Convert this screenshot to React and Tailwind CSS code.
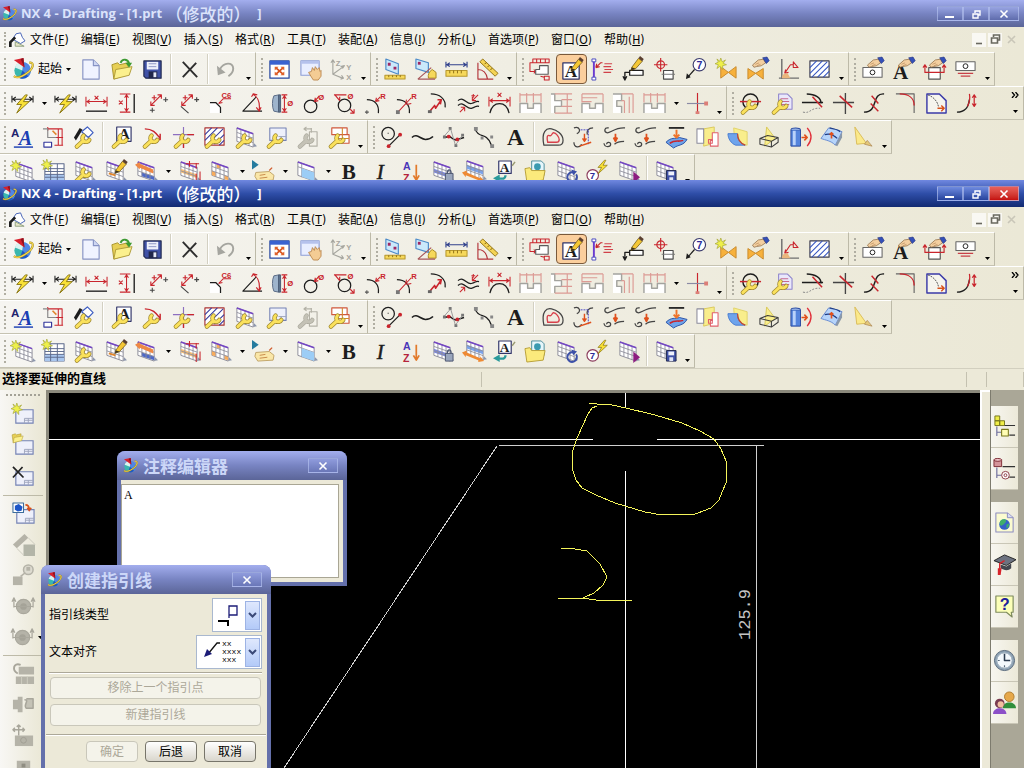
import React from "react";

const K = "#1d1d1d";
const R = "#c9252d";
const GR = "#b5b3a8";

const L = (d, c = K, w = 1.2, f = "none") => (
  <path d={d} stroke={c} strokeWidth={w} fill={f} strokeLinejoin="round" />
);
const F = (d, c) => <path d={d} fill={c} />;
const T = (x, y, s, t, c = K, serif = false) => (
  <text
    x={x}
    y={y}
    fontSize={s}
    fill={c}
    fontWeight="bold"
    fontFamily={serif ? '"Liberation Serif", serif' : '"Liberation Sans", sans-serif'}
  >
    {t}
  </text>
);

const Wrench = ({ c = "#fae15c", o = "#a08a30" }) => (
  <g fill="none" strokeLinecap="round">
    <path d="M4 21.5L10.500 15.500M11 10a3.800 3.800 0 1 0 6 4.500" stroke={o} strokeWidth="4.600" />
    <path d="M4 21.5L10.500 15.500M11 10a3.800 3.800 0 1 0 6 4.500" stroke={c} strokeWidth="3" />
  </g>
);
const Bolt = () => (
  <path d="M15 3L6 13h5l-5 9 13-12h-6l4-7z" fill="#f9e136" stroke="#8a7614" strokeWidth="1" />
);
const Grid = ({ fill = "#fff", band, line = "#8d8d9a" }) => (
  <g>
    <path d="M20 22l4-1-3-3z" fill="#8d97ad" />
    <path d="M3 2L20 8V22L3 16Z" fill={fill} stroke={line} strokeWidth="1" />
    {band}
    <path d="M3 6.7L20 12.7M3 11.3L20 17.3M7.2 3.5V17.5M11.5 5V19M15.7 6.5V20.5" stroke={line} strokeWidth=".9" fill="none" />
    <path d="M3 2L20 8" stroke="#7446c4" strokeWidth="1.6" />
  </g>
);
const Star = ({ x = 6, y = 6 }) => (
  <g transform={`translate(${x} ${y})`}>
    <path d="M0-6L1.5-2 5-4 2.5-.5 6 1 2 2 2 6-.7 2.6-4 5-2.5 1-6 0-2.5-1.7-4-5-1-2.5z" fill="#eef04a" stroke="#a5a63a" strokeWidth=".7" />
  </g>
);
const Hand = () => (
  <g transform="translate(6 -1) scale(.76)">
    <path d="M1 11l8-7 7-1 3 5-6 4-6 1-4 1z" fill="#f3cfa0" stroke="#8c6a44" strokeWidth="1" />
    <path d="M5 10l5-2M7 12l5-2" stroke="#b88a5c" strokeWidth=".9" />
    <path d="M15 1l6-1 3 5-4 4z" fill="#3450b8" stroke="#1d2c7c" strokeWidth=".8" />
  </g>
);
const Folder = ({ s = 1 }) => (
  <g transform={`scale(${s})`}>
    <path d="M2 7l6-2 2 2 9-2v12L4 22z" fill="#e7cf56" stroke="#a8942e" />
    <path d="M6 12l17-3-3 9L4 22z" fill="#fbf08e" stroke="#b09c3a" />
  </g>
);
const Pencil = () => (
  <g transform="translate(6 -1) scale(.78)">
    <path d="M8 15L17 3l5 4-9 10-6 2z" fill="#f5c735" stroke="#6c5410" strokeWidth="1" />
    <path d="M7 19l1-4 5 2z" fill="#3c3020" />
    <path d="M17 3l2-3 5 4-2 3z" fill="#5a3f30" />
  </g>
);
const DimBar = () => L("M1 4v7M23 4v7M2 7.5h20M5 5.2L1.800 7.5 5 9.800M19 5.2l3.200 2.300L19 9.800", K, 1.1);
const Step = ({ d, r, w }) => (
  <g>
    {F(w, "#fff")}
    {L(d, "#a3a39e", 1.5)}
    {L(r, "#dc9a94", 1.2)}
  </g>
);
const Page = () => (
  <g>
    <path d="M4 6h18v14H4z" fill="#eef0fb" stroke="#7482b4" strokeWidth="1.2" />
    <path d="M13 15h9M13 17h9M13 15V20M17 15V20" stroke="#9fa6bd" fill="none" />
  </g>
);

const icons = {
  logo: (
    <>
      <circle cx="12" cy="13" r="8.500" fill="#3ab7ae" />
      {F("M4 10l8 3 1-9c-4 0-8 2-9 6z", "#d9f3f0")}
      {F("M13 4.500a8.500 8.500 0 0 1 4 15.500L12 13z", "#4f86e6")}
      {F("M12 13l6 6a8.500 8.500 0 0 1-9 2z", "#1d56c8")}
      {L("M19 5c5-1 5 4 0 9-5 4-12 8-16 5", "#9c8420", 2.2)}
      {L("M19 5c5-1 5 4 0 9-5 4-12 8-16 5", "#f5d850", 1.3)}
      {F("M3 2l10-2 1 10z", "#d8202c")}
      {F("M10 1l3-1 1 10z", "#8e1220")}
    </>
  ),
  file: (
    <>
      {L("M4 2h11l6 6v14H4z", "#8793c4", 1.2, "#f0f3ff")}
      {L("M15 2v6h6", "#8793c4", 1.2, "#cfd7f2")}
    </>
  ),
  open: (
    <>
      <Folder />
      {L("M11 5c2-5 8-4 9 1", "#3d9a32", 2)}
      {F("M16 5h7l-3 5z", "#3d9a32")}
    </>
  ),
  save: (
    <>
      {L("M3 3h18v18H5l-2-2z", "#20294f", 1.2, "#3f51a6")}
      {F("M6 4h12v8H6z", "#eef1fb")}
      {F("M8 14h9v7H8z", "#20264a")}
      {F("M13 15h3v5h-3z", "#e4e8f6")}
      {L("M8 6h8M8 9h8", "#8d97c4", 1)}
    </>
  ),
  del: L("M5 4l15 16M19 5L5 20", "#2e2e2e", 2),
  undo: (
    <>
      {L("M5 12c4-8 14-8 14-1 0 3-2 6-5 8", "#a5a59f", 2)}
      {F("M2 8l1 10 8-3z", "#a5a59f")}
    </>
  ),
  fit: (
    <>
      {L("M2 3h20v18H2z", "#27479f", 1.3, "#fff")}
      {F("M2 3h20v4H2z", "#3a62d0")}
      {L("M8 10l8 7M16 10l-8 7", "#d8521c", 1.8)}
      {F("M7 9h4l-4 4zM17 9h-4l4 4zM7 18v-4l4 4zM17 18v-4l-4 4z", "#e0622a")}
    </>
  ),
  pan: (
    <>
      {L("M2 3h19v15H2z", "#8f9fd6", 1.2, "#e9eeff")}
      {F("M2 3h19v3H2z", "#b6c2ec")}
      {L("M10 15l3-1 1-4 2 3 1-4 2 3 2-2 1 4 1-1v6l-3 4h-5l-2-3z", "#b98448", 0.9, "#f4cc94")}
    </>
  ),
  csys: (
    <>
      {L("M3 3v14l10 4M3 17l11-8M1 5l2-3 2 3M11 9l4-1-2 3M11 22l3-1-2-3", "#a6a69f", 1.2)}
      {T(6, 8, 8, "Z", "#a6a69f")}
      {T(17, 12, 8, "Y", "#a6a69f")}
      {T(17, 23, 8, "X", "#a6a69f")}
    </>
  ),
  measure: (
    <>
      {L("M3 1l13 5v11L3 12z", "#4c8ac8", 1.2, "#cbe9fb")}
      {F("M5 5h3v3H5zM11 9h3v3h-3z", "#a02860")}
      {L("M2 18h21v4H2z", "#b8982e", 1.1, "#f6d85a")}
      {L("M6 18v2M10 18v2M14 18v2M18 18v2", "#8c6e14", 1)}
    </>
  ),
  measureAngle: (
    <>
      {L("M2 1l13 4v10L2 11z", "#4c8ac8", 1.2, "#cbe9fb")}
      {F("M4 4h3v3H4z", "#a02860")}
      {L("M15 21a9 9 0 0 1 4-9l4 3v6z", "#a8871e", 1, "#f6d85a")}
      {L("M4 22L18 10M4 22h18", "#a5555a", 1.2)}
    </>
  ),
  ruler: (
    <>
      {L("M1 4v6M23 4v6M2 7h20M5 5L2 7l3 2M19 5l3 2-3 2", "#30408c", 1.2)}
      {L("M1 13h22v6H1z", "#b8982e", 1.1, "#f6d85a")}
      {L("M5 13v3M9 13v3M13 13v3M17 13v3", "#8c6e14", 1)}
    </>
  ),
  protractor: (
    <>
      {L("M2 5v17h16M2 12c6 0 9 4 10 10", "#b3343a", 1.2)}
      {L("M4 4l3-3 16 15-3 3z", "#947414", 1, "#f4d355")}
      {L("M9 6l2-1M12 9l2-1M15 12l2-1", "#7c6210", 1)}
    </>
  ),
  views: (
    <>
      {L("M4 1h17v4H4zM8 1v4M12 1v4M17 1v4M4 5H1v9h6M5 12l2 2-2 2", R, 1.1)}
      {L("M11 8h9v9H7v-5h4z", "#5c5c5c", 1.2, "#fff")}
      {L("M16 19h5v4h-5zM16 20l-4-1", R, 1.1)}
    </>
  ),
  annot: (
    <>
      {L("M3 5h17v17H3z", "#303468", 1.3, "#fff")}
      {T(5, 20, 18, "A", K, true)}
      <Pencil />
    </>
  ),
  feature: (
    <>
      {L("M3 3v17", "#6a3bd0", 2)}
      {L("M1 1h4v3H1zM1 20h4v3H1z", "#4a4ac0", 1, "#fff")}
      {L("M5 10l5-5h2M5 10l4-1M5 10l1-4", R, 1.2)}
      {L("M14 6h8M13 9h8M14 12h9M13 15h8", "#d1424a", 1.1)}
    </>
  ),
  idSymbol: (
    <>
      {L("M8 13h14v5H8z", K, 1.3, "#fff")}
      {L("M8 15H3v7M1 19l2 4 2-4", K, 1.4)}
      <g transform="translate(-2 -1)"><Pencil /></g>
    </>
  ),
  target: (
    <>
      <circle cx="8" cy="7" r="4" stroke={R} strokeWidth="1.200" fill="none" />
      {L("M8 0v14M1 7h14", R, 1.2)}
      {L("M11 13h10v9H11z", "#4a4a4a", 1.2, "#fff")}
      {L("M9 17h14", "#777", 1)}
    </>
  ),
  balloon: (
    <>
      <circle cx="16" cy="7" r="6.500" stroke="#3c3c6e" strokeWidth="1.200" fill="#fff" />
      {T(13, 11, 11, "7", "#2b2b9a")}
      {L("M11 12L4 20", K, 1.2)}
      {F("M2 22l1-6 4 4z", K)}
    </>
  ),
  weld: (
    <>
      {L("M6 9v12l8-6 8 6V9l-8 6z", "#c98a2c", 1, "#f7b13c")}
      <Star x={6} y={6} />
    </>
  ),
  weldEdit: (
    <>
      {L("M2 11v11l8-6 8 6V11l-8 5z", "#c98a2c", 1, "#f7b13c")}
      <Hand />
    </>
  ),
  datum: (
    <>
      {L("M5 1v21M2 21h21", "#6f6f6f", 1.5)}
      {L("M8 16l6-9h3M8 16l4-1M8 16l1-4M17 4v6l5 0z", R, 1.1)}
      {F("M5 21a5 5 0 0 1 6-5l3 5z", "#e9b57c")}
    </>
  ),
  hatch: (
    <>
      {L("M2 3h20v17H2z", "#3c3c4c", 1.2, "#fff")}
      {L("M2 10l7-7M2 16l13-13M4 20L20 4M10 20l12-12M16 20l6-6", "#3555c0", 1.1)}
    </>
  ),
  tolEdit: (
    <>
      {L("M2 10h20v10H2z", "#666", 1.1, "#fff")}
      <circle cx="12" cy="15" r="2.500" stroke={K} fill="none" />
      <Hand />
    </>
  ),
  textEdit: (
    <>
      {T(1, 22, 22, "A", K, true)}
      <Hand />
    </>
  ),
  boxEdit: (
    <>
      {L("M6 10h12v12H6z", "#555", 1.2, "#fff")}
      {L("M2 8v7h20V8M0 10l2-3 2 3M20 10l2-3 2 3", R, 1.2)}
      <Hand />
    </>
  ),
  tolerance: (
    <>
      {L("M2 4h20v9H2z", "#666", 1.1, "#fff")}
      <circle cx="12" cy="8.500" r="2.500" stroke={K} fill="none" />
      {L("M4 16h16M7 19h10", "#c84048", 1.3)}
    </>
  ),
  infer: (
    <>
      <DimBar />
      <Bolt />
    </>
  ),
  horiz: (
    <>
      {L("M1 5v10M23 5v10M2 10h20M5 8l-3 2 3 2M19 8l3 2-3 2M10 4l4 4M14 4l-4 4", R, 1.1)}
      {L("M1 20h22", K, 1.4)}
    </>
  ),
  vert: (
    <>
      {L("M4 2h11M4 21h11M11 3v17M9 6l2-3 2 3M9 17l2 3 2-3M3 9l4 4M7 9l-4 4", R, 1.1)}
      {L("M19 2v20", K, 1.4)}
    </>
  ),
  parallel: (
    <>
      {L("M4 14L15 3M4 10v4l4 0M11 3h4v4M5 6h5M7.500 3.500v5", R, 1.2)}
      {L("M17 8h5M19.500 5.500v5M3 19h5M5.500 16.500v5", "#444", 1.1)}
    </>
  ),
  perp: (
    <>
      {L("M4 14L15 3M4 10v4l4 0M11 3h4v4M5 6h5M7.500 3.500v5", R, 1.2)}
      {L("M17 8h5M19.500 5.500v5M3 15l8 7", "#444", 1.2)}
    </>
  ),
  chamfer: (
    <>
      {F("M1 11h6l5 5v6H1z", "#fff")}
      {L("M1 11h6l5 5v6", K, 1.3)}
      {L("M10 12l5-5h8M10 12l4-1", R, 1.1)}
      {T(13, 6, 8, "C6", R)}
    </>
  ),
  angle: (
    <>
      {L("M17 5L3 20h20", K, 1.2)}
      {L("M13 2c6 3 8 9 7 17M12 5l2-3 4 1M17 16l3 4 2-4", R, 1.2)}
    </>
  ),
  cylinder: (
    <>
      {L("M3 4l5-1v18l-5-1c-2-4-2-12 0-16z", "#5b6c86", 1, "#9eb4cc")}
      {L("M8 3h2v18H8z", "#4a5a74", 1, "#5f7690")}
      {L("M11 3h6M11 21h6M14 4v16M12 7l2-3 2 3M12 17l2 3 2-3", R, 1.1)}
      {T(17, 15, 8, "Ø", R)}
    </>
  ),
  diameter: (
    <>
      <circle cx="9" cy="15" r="6.500" stroke={K} strokeWidth="1.300" fill="none" />
      {L("M13 10l5-6M13 10l1-4M13 10l4-1", R, 1.2)}
      {T(17, 8, 8, "Ø", R)}
    </>
  ),
  hole: (
    <>
      <circle cx="12" cy="14" r="6.500" stroke={K} strokeWidth="1.300" fill="none" />
      {L("M1 3h13M2 3l5 6M18 18l4 4M7 9V5M22 18v4h-4", R, 1.2)}
      {T(15, 7, 8, "Ø", R)}
    </>
  ),
  radius: (
    <>
      {L("M3 8c8 0 13 5 12 14", K, 1.3)}
      {L("M12 10l5-5M12 10l1-4M12 10l4-1", R, 1.1)}
      {L("M1 21h4M3 19v4", "#555", 1.1)}
      {T(17, 7, 8, "R", R)}
    </>
  ),
  radiusC: (
    <>
      {L("M2 8c8 0 14 5 13 14", K, 1.3)}
      {L("M3 21L17 6M12 8l-1 5M12 13l5-1", R, 1.1)}
      {F("M1 19h4v4H1z", "#777")}
      {T(17, 7, 8, "R", R)}
    </>
  ),
  foldRadius: (
    <>
      {L("M5 2c9 0 16 5 15 14", K, 1.3)}
      {L("M4 20l5-6 1 3 6-9M12 8l4 0-1 5", R, 1.6)}
      {F("M2 19h4v3H2z", "#666")}
    </>
  ),
  thickness: (
    <>
      {L("M1 9c6-5 9 4 14 3s4-3 8-2M1 14c6-5 9 4 14 3s4-3 8-2", K, 1.3)}
      {L("M22 3l-6 6M16 9v-4M16 9h4M3 21l5-5M8 16v4M8 16H4M15 4h4M17 2v4", R, 1.1)}
    </>
  ),
  arc: (
    <>
      {L("M2 22c3-13 17-13 20 0", K, 1.3)}
      {L("M1 5v10M23 5v10M2 9h20M5 7L2 9l3 2M19 7l3 2-3 2M10 1l4 4M14 1l-4 4", R, 1.1)}
    </>
  ),
  chain1: <Step w="M1 12h8v5h6v-5h8v10H1z" d="M1 22V12h8v5h6v-5h8v10" r="M1 11V1M8 11V1M15 11V1M23 11V1M1 3h22" />,
  chain2: <Step w="M1 2h4v7h7v6H5v7H1z" d="M1 2h4v7h7v6H5v7" r="M5 2h18M12 8h11M12 15h11M5 22h18M18 2v20" />,
  chain3: <Step w="M1 12h8v5h6v-5h8v10H1z" d="M1 22V12h8v5h6v-5h8v10" r="M1 2h22M1 6h16M1 10h10M1 2v9M23 2v9" />,
  chain4: <Step w="M1 2h9v7H5v6h5v7H1z" d="M1 2h9v7H5v6h5v7" r="M10 2h12M13 9v13M18 5v17M22 2v20M10 9h3" />,
  cross: (
    <>
      {L("M12 1v22", R, 1.2)}
      {L("M1 12h20", "#8a8aa4", 1.2)}
      {F("M19 10h4v4h-4zM10 20h4v3h-4z", "#dc7f78")}
    </>
  ),
  editView: (
    <>
      <circle cx="12" cy="10" r="8" stroke={K} strokeWidth="1.500" fill="none" />
      {L("M1 10h22", R, 1.5)}
      <Wrench />
    </>
  ),
  editDoc: (
    <>
      {L("M9 2h9l5 5v11H9z", "#8d84cc", 1.1, "#eae8fb")}
      {L("M11 7h8M11 10h9M11 13h9", "#c66a90", 1.1)}
      <Wrench />
    </>
  ),
  trim: (
    <>
      {L("M1 11h22M6 2c9 0 15 4 15 10", K, 1.5)}
      {L("M12 5l10 11", R, 1.6)}
      <path d="M2 21c8 2 8-5 18-4" stroke="#888" strokeDasharray="2 1.500" fill="none" />
    </>
  ),
  corner: (
    <>
      {L("M1 11h22M14 1v22", "#444", 1.4)}
      {L("M8 4l13 12", R, 1.6)}
    </>
  ),
  spline: (
    <>
      {L("M22 2c-14-1-5 19-21 19", K, 1.5)}
      {L("M9 4l7 8M8 12l8 8", R, 1.5)}
    </>
  ),
  fillet: (
    <>
      {L("M2 2h19v20", "#666", 1.2)}
      {L("M6 2c10 0 15 5 15 12", R, 1.4)}
    </>
  ),
  sheetArrow: (
    <>
      {L("M2 2h13l7 7v13H2z", "#3a3aa8", 1.5, "#f6f5ee")}
      <path d="M3 3c6 2 10 7 11 12" stroke="#555" strokeDasharray="2 1" fill="none" />
      {L("M13 17h7M17 14l3 3-3 3", "#d8521c", 1.5)}
    </>
  ),
  stretch: (
    <>
      {L("M1 21c9 0 12-5 13-13", K, 1.5)}
      {L("M14 2c1 5 0 9-2 13M19 3v12M17 6l2-3 2 3M17 12l2 3 2-3", R, 1.3)}
    </>
  ),
  fonts: (
    <>
      {T(0, 11, 12, "A", "#22226e")}
      <text x="8" y="20" fontSize="21" fontStyle="italic" fontWeight="bold" fill="#1b3fb4" fontFamily='"Liberation Serif", serif'>A</text>
      {L("M3 22h20", "#1b3fb4", 1.5)}
    </>
  ),
  layout: (
    <>
      {L("M6 3h15v17M6 1v4M13 12h9M17 3v17M13 20h9", R, 1.1)}
      {L("M1 3h5v9h9", "#888", 1.2)}
      {L("M2 17h8v5H2z", "#33379c", 1.2, "#fff")}
      {L("M11 5l4 4", "#e0852c", 1.6)}
    </>
  ),
  editStyle: (
    <>
      {F("M1 12L7 2l3 2-7 11z", K)}
      {L("M9 6l6-5 6 6-5 5z", "#3c5cc0", 1.2, "#fff")}
      <Wrench />
    </>
  ),
  editText: (
    <>
      {L("M7 1h15v15H7z", "#303468", 1.2, "#fff")}
      {T(9, 14, 16, "A", K, true)}
      <Wrench />
    </>
  ),
  editLeader: (
    <>
      {L("M4 3c9 0 12 5 16 10M20 8v6h-5", R, 1.5)}
      <Wrench />
    </>
  ),
  editCross: (
    <>
      {L("M12 1v22M1 9h22", "#8d6fc0", 1.2)}
      {L("M16 9h7M12 16v7", R, 1.4)}
      <Wrench />
    </>
  ),
  editHatch: (
    <>
      {L("M2 2h20v18H2z", "#a33", 1.2, "#fff")}
      {L("M2 9l7-7M2 15l13-13M6 18L21 3M12 19l10-10M17 20l5-5", "#33379c", 1.1)}
      <Wrench />
    </>
  ),
  editGrid: (
    <>
      <Grid />
      <Wrench />
    </>
  ),
  editSheet: (
    <>
      {L("M5 2h17v13H5z", "#7482b4", 1.1, "#eef0fb")}
      {L("M14 11h8M17 11v4", "#9fa6bd", 1)}
      <Wrench />
    </>
  ),
  editGray: (
    <>
      {L("M14 6h8v15h-8zM8 3h8M8 3l3-2M8 3l3 2M16 2v5", "#b3b1a6", 1.2)}
      <Wrench c="#c4c2b6" o="#aeaca0" />
    </>
  ),
  editOrd: (
    <>
      {L("M5 2h16v7H5zM9 9h14v9H9z", "#d0583c", 1.2, "#fff")}
      {L("M16 2v16M9 13h14", "#d0882c", 1.1)}
      <Wrench />
    </>
  ),
  circleLine: (
    <>
      <circle cx="8.500" cy="8" r="6.500" stroke={K} strokeWidth="1.300" fill="none" />
      {F("M8 7h1v1H8z", K)}
      {L("M9 21L21 9", K, 1.2)}
      <circle cx="9" cy="21" r="2" fill={R} />
      <circle cx="21" cy="9" r="2" fill={R} />
    </>
  ),
  curve: L("M1 12c5-5 9 2 14 2 4 0 6-1 8-3", K, 1.6),
  polySpline: (
    <>
      {L("M2 11c3 2 4-1 6 0s5 5 8 3l7-2", K, 1.6)}
      {L("M2 11l7-8 5 17 8-11", "#999", 1)}
      <circle cx="7" cy="11" r="2" fill={R} />
      <circle cx="16" cy="14" r="2" fill={R} />
      {F("M7 1h3v3H7zM13 19h3v3h-3zM20 8h3v3h-3zM1 10h3v3H1z", "#777")}
    </>
  ),
  offset: (
    <>
      {L("M2 3c3 8 8 6 12 9s4 6 6 10", K, 1.4)}
      {F("M1 1h4v4H1zM18 19h4v4h-4zM8 11h3v3H8zM18 10h3v3h-3z", "#888")}
    </>
  ),
  bigA: T(3, 20, 25, "A", K, true),
  contour: (
    <>
      {L("M3 20C0 5 6 2 11 3s12 5 12 12c0 3-2 5-5 5z", "#444", 1.3)}
      {L("M7 17c-1-5-1-8 2-7 2 1 2-2 4-3 3 0 6 5 6 7s-1 3-3 3z", "#d8404a", 1.4)}
    </>
  ),
  proj1: (
    <>
      {L("M2 2c6-2 8 4 3 6M2 17c0 6 6 6 8 2M22 2c-5 0-7 3-6 7", "#444", 1.3)}
      <path d="M9 4h8v15" stroke="#4444c4" strokeDasharray="2 1" fill="none" />
      {L("M13 8v8M11 13l2 3 2-3M8 21l12-4", "#e0501c", 1.5)}
    </>
  ),
  proj2: (
    <>
      {L("M6 2c-5-1-5 4-2 5s9-6 19-5M1 18c1 5 7 4 7 1s-5-2-4 0M12 19c3-3 6-3 10-3", "#444", 1.3)}
      {L("M13 8v7M11 12l2 4 2-4", "#e0501c", 1.8)}
    </>
  ),
  surf: (
    <>
      {L("M1 17c6-6 9-3 14-5l8 2c-4 7-9 5-14 9z", "#2a53a8", 1, "#6fa4ea")}
      {L("M5 18c6-4 9-1 14-3", R, 1.6)}
      {L("M4 2h16", K, 1.8)}
      {L("M12 4v8M9 9l3 3 3-3", "#f0742a", 2)}
    </>
  ),
  books: (
    <>
      {L("M8 3l11-2v17L8 21z", "#d9c95a", 1, "#f9ee8c")}
      {L("M1 3h7v15H1z", "#8c8c9c", 1.1, "#fff")}
      {L("M17 7h6v14h-8v-6h2z", "#e0606a", 1.1, "#fff")}
      {L("M13 14h4v4h-4z", "#e0606a", 1.1)}
    </>
  ),
  surfCut: (
    <>
      {L("M7 2l14 4v14L8 17z", "#e0d26a", 1, "#f9ee8c")}
      {L("M1 8h10c0 7 3 10 8 12H9C4 18 1 13 1 8z", "#4a7cd0", 1, "#6ea4ec")}
      {L("M11 8c0 7 3 10 8 12", "#c84a2c", 1.3)}
    </>
  ),
  boxCut: (
    <>
      {L("M9 1l9 12-11 8z", "#d9c95a", 1, "#f9ee8c")}
      {L("M2 13l8-3 11 2-7 4zM2 13v6l12 3 7-5v-5M14 16v6", "#3c3c3c", 1.1)}
    </>
  ),
  tube: (
    <>
      {L("M2 4h10v17H2z", "#294aa0", 1, "#5484dc")}
      {F("M4 5h3v15H4z", "#b9d2fa")}
      {L("M2 4a5 2 0 0 1 10 0", "#294aa0", 1.1, "#9dbcf2")}
      {L("M13 12h6M16 9l3 3-3 3", "#e0501c", 1.7)}
      {L("M19 2c5 6 5 13 0 19", "#e0303a", 1.4)}
    </>
  ),
  sheetSurf: (
    <>
      {L("M1 13L9 2c5 2 9 1 14 4l-7 14C11 15 6 15 1 13z", "#6a8cd0", 1, "#b6d4fa")}
      {F("M16 20l7-14v6l-5 9z", "#8a98a8")}
      {L("M5 9c6-2 10 1 13 4M10 2c4 1 8 1 11 4", "#1d3a84", 1.2)}
      {L("M12 13V7M10 9l2-2 2 2", "#e0501c", 1.7)}
    </>
  ),
  wedge: (
    <>
      {L("M4 1l12 17-10 1z", "#d9bc5a", 1, "#fbe98a")}
      {L("M14 19l8 2-5-6z", "#b08c5a", 0.8, "#e4c878")}
    </>
  ),
  gridNew: (
    <>
      <g transform="translate(2 1)"><Grid /></g>
      <Star x={5} y={6} />
    </>
  ),
  tableNew: (
    <>
      {L("M3 4h20v18H3z", "#5c6a8c", 1.1, "#fff")}
      {F("M3 15h20v7H3z", "#a9c6ee")}
      {L("M3 9h20M3 12h20M3 15h20M3 18h20M9 4v18M16 4v18", "#5c6a8c", 1)}
      <Star x={5} y={5} />
    </>
  ),
  gridPencil: (
    <>
      <Grid />
      {L("M5 14l7 2", "#e0852c", 2)}
      <Pencil />
    </>
  ),
  gridInsert: (
    <>
      <Grid band={F("M7 13L20 17v4L7 17z", "#4c68c8")} />
      {F("M0 5l5-3v2l14 6v4L5 8v2z", "#ee8844")}
    </>
  ),
  gridSize: (
    <>
      <Grid band={F("M3 9L20 15v4L3 13z", "#f8c078")} />
      {L("M12 1v6M19 3v6M8 4h14M19 14v9M23 12v9", R, 1.1)}
    </>
  ),
  gridMerge: <Grid band={F("M3 11l4 2v4l-4-1zM16 16l4 1v4l-4-1zM8 4l4 1v4L8 8z", "#f8ac5c")} />,
  tag: (
    <>
      {F("M0 0l7 5-7 5z", "#257b9e")}
      {L("M4 13l14-1 5 4-1 5-16 1-3-5z", "#c0a468", 1, "#fae7a8")}
      {L("M8 16l6-1M8 19l8-1", "#c88a4a", 1)}
      {L("M18 11l3-3", "#d05c2c", 1.3)}
    </>
  ),
  gridCell: (
    <>
      <path d="M20 22l4-1-3-3z" fill="#8d97ad" />
      {L("M3 2L20 8V22L3 16Z", "#8d8d9a", 1, "#fff")}
      {L("M3 7L20 13M7 4V18", "#8d8d9a", 0.9)}
      {F("M7 8.500L20 13V22L7 17.500z", "#9ccdf6")}
      {L("M3 2L20 8", "#7446c4", 1.6)}
    </>
  ),
  bold: T(4, 20, 22, "B", K, true),
  italic: (
    <text x="8" y="20" fontSize="22" fontStyle="italic" fill={K} stroke={K} strokeWidth=".5" fontFamily='"Liberation Serif", serif'>I</text>
  ),
  sort: (
    <>
      {T(3, 10, 11, "A", "#4a35b8")}
      {T(3, 23, 11, "Z", "#b5243c")}
      {L("M17 5v15M14 16l3 5 3-5", "#e27a2a", 1.8)}
    </>
  ),
  gridLock: (
    <>
      <Grid band={F("M3 9L20 15v4L3 13z", "#7c88dc")} />
      {L("M15 14h8v8h-8z", "#4c5670", 1, "#9aa6bd")}
      {L("M17 14c0-5 4-5 4 0", "#4c5670", 1.3)}
    </>
  ),
  gridMove: (
    <>
      <g transform="translate(2 -1)"><Grid band={F("M3 6L20 12v4L3 10z", "#7aa2ea")} /></g>
      {F("M0 13l5-2v2l14 6v-2l4 5-6 1v-2L4 16v2z", "#ee8a34")}
    </>
  ),
  textImport: (
    <>
      {L("M6 1h13v13H6z", "#303468", 1.2, "#fff")}
      {T(7, 12, 14, "A", K, true)}
      {L("M20 6l3-4", "#9a9a70", 1.5)}
      {L("M13 16c0 4-3 4-8 3", "#2a9a9a", 2.4)}
      {F("M0 19l7-4v8z", "#2a9a9a")}
    </>
  ),
  folderDoc: (
    <>
      {L("M8 1h10l3 3v12H8z", "#4c8c9c", 1, "#e6f6fa")}
      <circle cx="14" cy="7" r="3.500" fill="#3a9ab0" />
      {L("M1 9l5-1 2 3h14l-2 10-17 2z", "#b8a038", 1, "#fbea7c")}
    </>
  ),
  gridRefresh: (
    <>
      <Grid />
      {L("M22 15a5 5 0 1 1-3-2", "#3c50a8", 2)}
      {F("M17 10l6 2-4 4z", "#3c50a8")}
    </>
  ),
  balloonBolt: (
    <>
      <circle cx="7" cy="16" r="6" stroke="#8c3c5c" strokeWidth="1.200" fill="#fff" />
      {T(4, 20, 10, "7", "#2b2b9a")}
      <g transform="translate(8 -2) scale(.75)"><Bolt /></g>
    </>
  ),
  gridNext: (
    <>
      <Grid />
      {F("M17 12l7 6-7 6z", "#8c1c80")}
    </>
  ),
  gridSave: (
    <>
      <Grid />
      {L("M13 11h10v11H13z", "#20294f", 1, "#3f51a6")}
      {F("M15 12h6v4h-6z", "#eef1fb")}
      {F("M16 18h4v4h-4z", "#dfe3f4")}
    </>
  ),
  pageNew: (
    <>
      <Page />
      <Star x={5} y={5} />
    </>
  ),
  pageOpen: (
    <>
      <Page />
      <g transform="translate(-1 -4) scale(.55)"><Folder /></g>
    </>
  ),
  pageDel: (
    <>
      <Page />
      {L("M1 1l11 11M11 1L1 12", "#222", 1.8)}
    </>
  ),
  pageView: (
    <>
      <g transform="translate(1 2)"><Page /></g>
      {L("M1 1h11v10H1z", "#3c6c9c", 1.1, "#fff")}
      {F("M3 4l4-2 4 3-1 4-4 1-3-2z", "#1d56c8")}
      {L("M14 3c3 0 4 2 4 5M16 6l2 3 2-3", "#d8521c", 1.7)}
    </>
  ),
  g1: (
    <>
      {F("M1 12L13 1l4 4L5 16z", GR)}
      {F("M12 12h12v12H12z", "#b3b5a8")}
      {L("M17 5l7 7M5 16l7 7", "#cbc9bd", 1)}
    </>
  ),
  g2: (
    <>
      {F("M1 13h10v9H1z", GR)}
      <circle cx="17" cy="6" r="5" stroke={GR} strokeWidth="1.600" fill="#dddbd0" />
      {L("M9 13l5-4", GR, 1.6)}
      {F("M15 3h4v4h-4z", GR)}
    </>
  ),
  g3: (
    <>
      <circle cx="12" cy="12" r="7.500" fill={GR} stroke="#a9a79c" strokeWidth="1.200" />
      <circle cx="12" cy="12" r="3.500" fill="#a5a398" />
      {L("M2 13V4M0 7l2-4 2 4M22 13V4M20 7l2-4 2 4M2 12h20", "#aaa89d", 1.3)}
    </>
  ),
  g4: (
    <>
      {F("M7 5h16v8H7zM4 15h19v8H4z", GR)}
      {L("M9 3c-8-3-9 6-3 9", "#a8a69b", 2)}
      {L("M10 15v8M16 15v8", "#cfcdc0", 1)}
    </>
  ),
  g5: (
    <>
      {F("M1 7h5V4h5v16H6v-3H1z", GR)}
      {L("M13 7c6 0-2 6 2 9h7V6h-7", "#a8a69b", 1.6, "#c4c2b6")}
    </>
  ),
  g6: (
    <>
      {F("M3 12h19v11H3z", GR)}
      {L("M7 1v11M1 6h12M5 3l2-2 2 2M3 4L1 6l2 2M11 4l2 2-2 2", "#a8a69b", 1.5)}
      <circle cx="12" cy="17" r="3" stroke="#a09e93" fill="none" />
    </>
  ),
  g7: (
    <>
      {F("M5 6h14v10H5z", GR)}
      {F("M10 9h4v4h-4z", "#8f8d82")}
    </>
  ),
  navParts: (
    <>
      {L("M2 6h5v5H2zM7 6h5v5H7zM2 1h5v5H2z", "#77771c", 1, "#f0ee48")}
      {L("M4 12v10M4 18h5", "#6d6d9c", 1.2)}
      {L("M12 11h11M17 21h6", "#333", 1.2)}
      {L("M9 15h7v7H9z", "#77771c", 1.1, "#fffdb4")}
    </>
  ),
  navAssy: (
    <>
      {L("M1 3h8v7H1z", "#7c2c34", 1, "#d4949a")}
      <ellipse cx="5" cy="3" rx="4" ry="1.500" fill="#f0c4c8" stroke="#7c2c34" />
      {L("M4 11v11M4 19h5", "#6d6d9c", 1.2)}
      {L("M10 10h13M17 21h6", "#333", 1.2)}
      <circle cx="13" cy="19" r="4" stroke="#8c3c44" fill="#fff" />
      <circle cx="13" cy="19" r="1.500" stroke="#8c3c44" fill="none" />
    </>
  ),
  web: (
    <>
      {L("M3 2h12l6 5v15H3z", "#8c8cc0", 1.1, "#fbfbd0")}
      {L("M15 2v5h6", "#8c8cc0", 1, "#d8dcf4")}
      <circle cx="12" cy="14" r="5.500" fill="#3560c8" />
      {F("M9 9c4-1 6 1 4 3s-4 4-5 3-2-4 1-6zM14 14l3-1-1 4-2 1z", "#3fae6a")}
    </>
  ),
  cap: (
    <>
      {L("M1 8l11-6 12 5-10 6z", "#222", 1, "#6c7280")}
      {F("M8 12l6 2 5-3v5c-3 3-8 2-11 0z", "#43464f")}
      {L("M12 8L7 11v9", "#d8242c", 1.5)}
      {F("M5 16h4l-1 7H5z", "#d8242c")}
    </>
  ),
  help: (
    <>
      {L("M3 1h18v17h-2l1 5-6-5H3z", "#7d8a5c", 1.2, "#fcffb8")}
      {T(7, 16, 17, "?", "#20209c")}
    </>
  ),
  clock: (
    <>
      <circle cx="12" cy="12" r="10.500" fill="#8fa3b5" stroke="#58687a" />
      <circle cx="12" cy="12" r="8" fill="#f4f9fd" stroke="#9fb0bd" />
      {L("M12 5v7h6", "#2c3c50", 1.6)}
      {L("M12 17v2M5 12h2", "#5a6c7e", 1.2)}
    </>
  ),
  people: (
    <>
      {F("M10 18c0-8 14-8 14 0z", "#2f8f3c")}
      <circle cx="17" cy="6" r="5" fill="#e6a84a" stroke="#b07c30" />
      {F("M0 24c0-8 14-8 14 0z", "#8c50c8")}
      <circle cx="7" cy="13" r="5" fill="#7a3c50" />
      <circle cx="8" cy="14" r="3.200" fill="#f2bfa0" />
    </>
  ),
};

function Icon({ name, className = "size-6" }) {
  return (
    <svg viewBox="0 0 24 24" className={`shrink-0 overflow-visible ${className}`} aria-hidden="true">
      {icons[name]}
    </svg>
  );
}

function Caret() {
  return (
    <svg viewBox="0 0 5 3" className="h-[3px] w-[5px] shrink-0" aria-hidden="true">
      <path d="M0 0h5L2.500 3z" fill="#000" />
    </svg>
  );
}

function Tool({ name, active }) {
  return (
    <button
      type="button"
      aria-label={name}
      className={
        active
          ? "flex h-[30px] w-[31px] shrink-0 items-center justify-center rounded-sm border border-[#7a5a3c] bg-[#fbcf9d]"
          : "flex h-[30px] w-[31px] shrink-0 items-center justify-center"
      }
    >
      <Icon name={name} className="size-[23px]" />
    </button>
  );
}

function Drop() {
  return (
    <button type="button" aria-label="展开" className="flex h-6 w-3 shrink-0 items-center justify-center">
      <Caret />
    </button>
  );
}

function Grip() {
  return <span className="mr-px h-[23px] w-0 shrink-0 border-l-2 border-dotted border-[#b0aea2]" />;
}

function Bar({ items, first, grow, children }) {
  return (
    <div
      className={`flex h-[34px] items-center border-t border-r border-b border-t-white border-r-[#bdbaa8] border-b-[#c6c3b2] ${first ? "pl-1" : "pl-[5px]"} ${grow ? "grow" : "shrink-0"}`}
      role="toolbar"
    >
      <Grip />
      {children}
      {items.map((it, i) =>
        it === "|" ? (
          <span key={i} className="mx-[2px] h-[30px] w-[2px] shrink-0 border-l border-[#d3d0c2] bg-white" />
        ) : it === "v" ? (
          <Drop key={i} />
        ) : (
          <Tool key={i} name={it} active={it === "annot"} />
        )
      )}
      {grow ? (
        <button type="button" aria-label="更多" className="ml-auto flex h-[30px] flex-col items-center justify-between px-1 pt-1 pb-[5px]">
          <svg viewBox="0 0 8 6" className="h-[6px] w-2" fill="none" stroke="#000" strokeWidth="1.300" aria-hidden="true">
            <path d="M1 0l2.500 3L1 6M4.500 0L7 3 4.500 6" />
          </svg>
          <Caret />
        </button>
      ) : (
        <button type="button" aria-label="工具条选项" className="flex h-[30px] w-[13px] shrink-0 items-end justify-center pb-1">
          <Caret />
        </button>
      )}
    </div>
  );
}

const rows = [
  [
    ["file", "open", "save", "|", "del", "|", "undo"],
    ["fit", "pan", "csys"],
    ["measure", "measureAngle", "ruler", "protractor"],
    ["views", "annot", "feature", "idSymbol", "target", "balloon", "weld", "weldEdit", "datum", "hatch"],
    ["tolEdit", "textEdit", "boxEdit", "tolerance"],
  ],
  [
    ["infer", "v", "infer", "horiz", "vert", "parallel", "perp", "chamfer", "angle", "cylinder", "diameter", "hole", "radius", "radiusC", "foldRadius", "thickness", "arc", "chain1", "chain2", "chain3", "chain4", "chain1", "v", "cross"],
    ["editView", "editDoc", "trim", "corner", "spline", "fillet", "sheetArrow", "stretch"],
  ],
  [
    ["fonts", "layout", "editStyle", "|", "editText", "editLeader", "editCross", "editHatch", "editGrid", "editSheet", "editGray", "editOrd"],
    ["circleLine", "curve", "polySpline", "offset", "bigA", "|", "contour", "proj1", "proj2", "proj2", "surf", "books", "surfCut", "boxCut", "tube", "sheetSurf", "wedge"],
  ],
  [
    ["gridNew", "tableNew", "editGrid", "gridPencil", "gridInsert", "v", "gridSize", "gridMerge", "v", "tag", "v", "gridCell", "v", "bold", "italic", "sort", "gridLock", "gridMove", "textImport", "folderDoc", "gridRefresh", "balloonBolt", "gridNext", "|", "gridSave"],
  ],
];

const menus = [
  ["文件", "F"], ["编辑", "E"], ["视图", "V"], ["插入", "S"], ["格式", "R"], ["工具", "T"],
  ["装配", "A"], ["信息", "I"], ["分析", "L"], ["首选项", "P"], ["窗口", "O"], ["帮助", "H"],
];

function WinButton({ kind, tone, wide }) {
  return (
    <button
      type="button"
      aria-label={kind}
      className={`flex h-[15px] items-center justify-center border border-[#b9c6f2]/60 ${wide ? "w-[30px]" : "w-[26px]"} ${tone}`}
    >
      <svg viewBox="0 0 12 10" className="h-[10px] w-3" fill="none" stroke="#fff" aria-hidden="true">
        {kind === "最小化" && <path d="M1 8h9" strokeWidth="2" />}
        {kind === "还原" && <path d="M5 4V2h5v4H8M3 5h5v4H3z" strokeWidth="1.400" />}
        {kind === "关闭" && <path d="M2.500 1.500l7 7M9.500 1.500l-7 7" strokeWidth="1.600" />}
      </svg>
    </button>
  );
}

function TopArea({ active }) {
  const tone = active
    ? "bg-linear-to-b from-[#6f8be0] to-[#27439c]"
    : "bg-linear-to-b from-[#98a4e2] to-[#5f6cac]";
  return (
    <div className="bg-linear-to-r from-[#f6f5f1] via-[#f0eee3] to-[#ebe8d6]">
      <div
        className={`flex h-[27px] items-center pr-[5px] pl-px ${
          active
            ? "bg-linear-to-b from-[#7088e0] via-[#2f4ea8] to-[#122a72] text-white"
            : "bg-linear-to-b from-[#a3aeee] via-[#7884c2] to-[#5b6598] text-[#dbe3fb]"
        }`}
      >
        <Icon name="logo" className="mr-1 size-4" />
        <h1 className="flex grow items-center font-['Open_Sans','Noto_Sans_CJK_SC',sans-serif] text-[13px] font-bold whitespace-pre">
          <span>NX 4 - Drafting - [1.prt </span>
          <span className="font-['Noto_Sans_CJK_SC',sans-serif] text-[17px] leading-none font-medium">（修改的）</span>
          <span>{"  ]"}</span>
        </h1>
        <WinButton kind="最小化" tone={tone} />
        <WinButton kind="还原" tone={tone} />
        <WinButton kind="关闭" wide tone={active ? "bg-linear-to-b from-[#e8605a] to-[#c40d0d]" : tone} />
      </div>

      <nav className="flex h-[25px] items-center pl-1">
        <span className="mr-[2px] h-4 w-0 border-l-2 border-dotted border-[#b0aea2]" />
        <svg viewBox="0 0 20 18" className="mr-1 h-4 w-[18px]" aria-hidden="true">
          <path d="M5 8L9 2l5-1 2 5 3 4-5 3z" fill="#fff" stroke="#3555b0" />
          <path d="M1 17V11l6-6 2 2-5 5v5z" fill="#1d1d1d" />
          <path d="M8 11l10 5H8z" fill="#e5e6c8" stroke="#8a9c7a" />
        </svg>
        <div className="flex grow gap-3">
          {menus.map(([name, key]) => (
            <button key={key} type="button" className="text-xs leading-4 whitespace-nowrap">
              {name}
              <span className="font-['DejaVu_Sans_Condensed','DejaVu_Sans',sans-serif]">
                (<u>{key}</u>)
              </span>
            </button>
          ))}
        </div>
        <div className="flex gap-[2px] pr-[6px]">
          {["M3 10.500h6", "M4.500 4V2h6v5h-2M2.500 5h6v5h-6z", "M3 3l7 7M10 3l-7 7"].map((d, i) => (
            <button
              key={d}
              type="button"
              aria-label={["最小化文档", "还原文档", "关闭文档"][i]}
              className={`flex size-[14px] items-center justify-center ${i < 2 ? "bg-[#f9f8f3]" : ""}`}
            >
              <svg viewBox="0 0 13 13" className="size-[13px]" fill="none" stroke={i < 2 ? "#6a6960" : "#c9c6b8"} strokeWidth="1.600" aria-hidden="true">
                <path d={d} />
              </svg>
            </button>
          ))}
        </div>
      </nav>

      {rows.map((bars, r) => (
        <div key={r} className="flex h-[34px] items-center">
          {bars.map((items, b) => (
            <Bar key={b} items={items} first={b === 0} grow={r === 1 && b === 1}>
              {r === 0 && b === 0 && (
                <button type="button" className="flex w-[68px] shrink-0 items-center gap-1 pl-1 text-xs">
                  <Icon name="logo" className="size-[23px]" />
                  <span className="whitespace-nowrap">起始</span>
                  <Caret />
                </button>
              )}
            </Bar>
          ))}
        </div>
      ))}
    </div>
  );
}

function Dialog({ title, className, children }) {
  return (
    <section className={`absolute w-[230px] rounded-t-lg bg-[#6470ab] px-1 pb-1 ${className}`}>
      <header className="-mx-1 flex h-[29px] items-center rounded-t-lg bg-linear-to-b from-[#a3aeee] via-[#7884c2] to-[#5b6598] pr-[9px] pl-[5px]">
        <Icon name="logo" className="mr-[5px] size-4" />
        <h2 className="grow font-['Noto_Sans_CJK_SC',sans-serif] text-[17px] leading-none font-bold text-[#ccd7f8]">{title}</h2>
        <WinButton kind="关闭" wide tone="bg-linear-to-b from-[#8f9bdc] to-[#6a77b8]" />
      </header>
      {children}
    </section>
  );
}

function PicSelect({ id, label, options, width, children }) {
  return (
    <div className="flex items-center justify-between">
      <label htmlFor={id} className="text-xs">{label}</label>
      <div className={`relative h-[34px] ${width}`}>
        <select id={id} className="size-full appearance-none border border-[#a9b8cf] bg-white text-transparent">
          {options.map((o) => (
            <option key={o}>{o}</option>
          ))}
        </select>
        <span className="pointer-events-none absolute inset-0 flex items-center justify-end gap-[3px] pr-[2px]">
          {children}
          <span className="flex h-[29px] w-[15px] items-center justify-center border border-[#9db3e4] bg-linear-to-b from-[#dfe8fd] to-[#b3caf8]">
            <svg viewBox="0 0 9 6" className="h-[6px] w-[9px]" fill="none" stroke="#3b4a78" strokeWidth="2" aria-hidden="true">
              <path d="M1 1l3.500 3.500L8 1" />
            </svg>
          </span>
        </span>
      </div>
    </div>
  );
}

function Rule() {
  return <hr className="h-[2px] border-0 border-t border-[#aca899] bg-white" />;
}

export default function App() {
  return (
    <div className="flex h-screen flex-col overflow-hidden bg-[#ece9d8] font-['Liberation_Sans','Noto_Sans_CJK_SC',sans-serif] text-xs text-black">
      <div className="h-[180px] shrink-0 overflow-hidden">
        <TopArea />
      </div>
      <div className="shrink-0">
        <TopArea active />
      </div>

      <div className="flex h-[22px] shrink-0 items-stretch border-t border-[#d2cfbf]">
        <p className="w-[47%] pl-[2px] text-[13px] leading-[19px] font-bold">选择要延伸的直线</p>
        <span className="my-[3px] grow border-l border-[#c4c1b0]" />
        <span className="my-[3px] w-5 border-l border-[#c4c1b0]" />
        <span className="my-[3px] w-[38px] border-x border-[#c4c1b0]" />
      </div>

      <main className="relative flex min-h-0 grow">
        <aside className="flex w-[46px] shrink-0 flex-col items-center overflow-hidden bg-linear-to-r from-[#f8f7f4] to-[#e9e6d3] pt-1">
          <span className="mb-1 w-[34px] shrink-0 border-t-2 border-dotted border-[#a3a196]" />
          {["pageNew", "pageOpen", "pageDel", "-", "pageView", "g1", "g2", "g3", "g3v", "-", "g4", "g5", "g6", "g7"].map((n, i) =>
            n === "-" ? (
              <hr key={i} className="my-[2px] w-10 shrink-0 border-[#bdbaa8]" />
            ) : n === "g3v" ? (
              <div key={i} className="flex h-[31px] w-full shrink-0 items-center justify-end">
                <button type="button" aria-label={n}><Icon name="g3" className="size-[23px]" /></button>
                <Drop />
              </div>
            ) : (
              <button key={i} type="button" aria-label={n} className="flex h-[31px] w-full shrink-0 items-center justify-center">
                <Icon name={n} className="size-[23px]" />
              </button>
            )
          )}
        </aside>

        <div className="grow border-t-3 border-l-3 border-[#8b897c] bg-black">
          <svg className="block size-full" aria-label="图纸">
            <g transform="translate(-49 -393)" fill="none" shapeRendering="crispEdges">
              <path d="M49 439.500H593M657 439.500H3000M625.500 393V407M625.500 471V3000" stroke="#fff" />
              <path d="M499 445.500H764M756.500 446V3000M497 446L284 768" stroke="#d0d0d0" />
              <path
                d="M589 403.500L612 405L626 408L655 415L682 423L700 431L714 439L721 449L726 461V483L722 492L719 500L711 508L694 514.500H659L645 512L615 503L596 495L582 488L576 480L572.500 469V452L577 438L588 414L592 408L597 406"
                stroke="#f4f45a"
              />
              <path d="M561 548.500H572L587 551L600 564L607 577L603 585L594 593L583 598M558 598.500H585L600 600.500H632" stroke="#f4f45a" />
            </g>
            <text
              transform="translate(701 247) rotate(-90)"
              fontSize="17"
              fill="#c4c4c4"
              fontFamily='"Liberation Mono", monospace'
            >
              125.9
            </text>
          </svg>
        </div>

        <aside className="flex w-[44px] shrink-0">
          <span className="w-[10px] border-t-2 border-l-2 border-white bg-[#ece9d8]" />
          <div className="flex grow flex-col gap-3 border-l border-[#7d7b6e] bg-[#aaa797] pt-4">
            {[["navParts", "navAssy"], ["web", "cap", "help"], ["clock", "people"]].map((group) => (
              <div key={group[0]} className="flex w-[27px] flex-col">
                {group.map((n) => (
                  <button
                    key={n}
                    type="button"
                    aria-label={n}
                    className="flex h-[42px] items-center justify-center border-b border-[#c9c6b6] bg-linear-to-r from-[#f7f6f0] to-[#ece9d8]"
                  >
                    <Icon name={n} className="size-[23px]" />
                  </button>
                ))}
              </div>
            ))}
          </div>
        </aside>

        <Dialog title="注释编辑器" className="top-[61px] left-[117px]">
          <div className="bg-[#ece9d8] pt-1 pr-1 pb-1">
            <textarea
              aria-label="注释文本"
              defaultValue="A"
              className="block h-[94px] w-full resize-none border border-[#a9a694] bg-white px-[2px] py-[2px] font-['Liberation_Serif',serif] text-xs leading-4"
            />
          </div>
        </Dialog>

        <Dialog title="创建指引线" className="top-[175px] left-[41px]">
          <div className="bg-[#ece9d8] pt-1 pb-[6px]">
            <div className="flex flex-col gap-[3px] pr-[5px] pl-1">
              <PicSelect id="leader-type" label="指引线类型" options={["普通", "对齐"]} width="w-[50px]">
                <svg viewBox="0 0 26 26" className="size-[26px]" fill="none" aria-hidden="true">
                  <path d="M13 16V4h8v9h-8" stroke="#1c1c78" strokeWidth="1.300" />
                  <path d="M2 19h10M12 18v6" stroke="#000" strokeWidth="2" />
                </svg>
              </PicSelect>
              <PicSelect id="text-align" label="文本对齐" options={["顶部", "中间"]} width="w-[66px]">
                <svg viewBox="0 0 38 26" className="h-[26px] w-[38px]" aria-hidden="true">
                  <path d="M16 4h-3L4 15" stroke="#111" strokeWidth="1.300" fill="none" />
                  <path d="M0 18l3-8 5 5z" fill="#1c1c78" />
                  <g fontSize="8" fontFamily='"Liberation Mono", monospace' fill="#000">
                    <text x="18" y="7">xx</text>
                    <text x="18" y="15">xxxx</text>
                    <text x="18" y="23">xxx</text>
                  </g>
                </svg>
              </PicSelect>
              <Rule />
              <button type="button" disabled className="mx-px h-[22px] rounded-sm border border-[#c9c7ba] bg-[#f4f3ea] text-[#aca899]">
                移除上一个指引点
              </button>
              <button type="button" disabled className="mx-px mt-[2px] h-[22px] rounded-sm border border-[#c9c7ba] bg-[#f4f3ea] text-[#aca899]">
                新建指引线
              </button>
            </div>
            <div className="mt-2 px-px"><Rule /></div>
            <div className="mt-[5px] flex justify-end gap-[7px] pr-[11px]">
              <button type="button" disabled className="h-[21px] w-[52px] rounded-sm border border-[#c9c7ba] bg-[#f4f3ea] text-[#aca899]">确定</button>
              <button type="button" className="h-[21px] w-[52px] rounded-sm border border-[#77756a] bg-linear-to-b from-white to-[#d9d6cc]">后退</button>
              <button type="button" className="h-[21px] w-[52px] rounded-sm border border-[#77756a] bg-linear-to-b from-white to-[#d9d6cc]">取消</button>
            </div>
          </div>
        </Dialog>
      </main>
    </div>
  );
}
